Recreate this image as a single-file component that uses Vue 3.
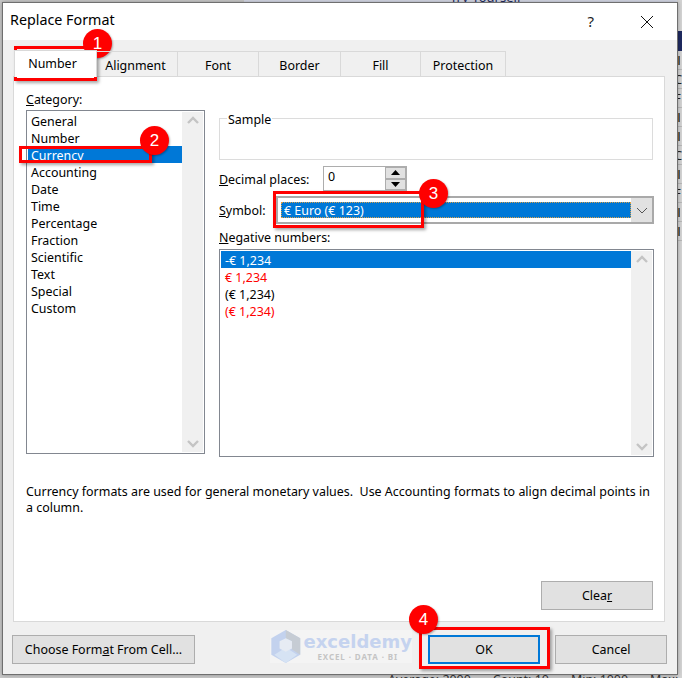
<script setup>
const tabs = ['Number', 'Alignment', 'Font', 'Border', 'Fill', 'Protection']
const categories = ['General', 'Number', 'Currency', 'Accounting', 'Date', 'Time', 'Percentage', 'Fraction', 'Scientific', 'Text', 'Special', 'Custom']
const negatives = [
  { t: '-€ 1,234', c: 'sel' },
  { t: '€ 1,234', c: 'red' },
  { t: '(€ 1,234)', c: '' },
  { t: '(€ 1,234)', c: 'red' }
]
const sheetRows = ['bar', 'C', 'F', 'bar', 'bar', 'C', 'bar', 'F', 'bar', 'bar']
</script>

<template>
  <div class="page">
    <div class="top-strip"><span class="top-text">Try Yourself</span></div>
    <div class="sheet-strip">
      <div class="sheet-head"></div>
      <div v-for="(r, i) in sheetRows" :key="i" class="sheet-row">
        <span v-if="r === 'bar'" class="sheet-bar"></span>
        <span v-else class="sheet-letter">{{ r }}</span>
      </div>
    </div>
    <div class="status">
      <span>Average: 2000</span>
      <span>Count: 10</span>
      <span>Min: 1000</span>
      <span>Max: 4000</span>
    </div>

    <div class="dialog">
      <header class="titlebar">
        <span class="title">Replace Format</span>
        <span class="help">?</span>
        <svg class="close" width="14" height="14" viewBox="0 0 14 14"><path d="M1 1 L13 13 M13 1 L1 13" stroke="#111" stroke-width="1" fill="none" /></svg>
      </header>

      <div class="tabs">
        <div v-for="(t, i) in tabs" :key="t" class="tab" :class="['tab' + i, { active: i === 0 }]">{{ t }}</div>
      </div>

      <section class="panel">
        <div class="columns">
          <div class="col-left">
            <div class="label"><u>C</u>ategory:</div>
            <div class="listbox cat-list">
              <div class="items">
                <div v-for="c in categories" :key="c" class="item" :class="{ sel: c === 'Currency' }">{{ c }}</div>
              </div>
              <div class="scroll">
                <svg width="16" height="10" viewBox="0 0 16 10"><path d="M3 8 L8 3 L13 8" fill="none" stroke="#c4c4c4" stroke-width="2.4" /></svg>
                <svg width="16" height="10" viewBox="0 0 16 10"><path d="M3 2 L8 7 L13 2" fill="none" stroke="#c4c4c4" stroke-width="2.4" /></svg>
              </div>
            </div>
          </div>

          <div class="col-right">
            <div class="sample"><span class="legend">Sample</span></div>
            <div class="row decimal-row">
              <span class="row-label dec-label"><u>D</u>ecimal places:</span>
              <div class="spin-input">
                <span>0</span>
                <div class="spin">
                  <div class="spin-btn"><svg width="9" height="5" viewBox="0 0 9 5"><path d="M4.5 0 L9 5 L0 5 Z" fill="#000" /></svg></div>
                  <div class="spin-btn"><svg width="9" height="5" viewBox="0 0 9 5"><path d="M0 0 L9 0 L4.5 5 Z" fill="#000" /></svg></div>
                </div>
              </div>
            </div>
            <div class="row symbol-row">
              <span class="row-label sym-label"><u>S</u>ymbol:</span>
              <div class="combo">
                <div class="combo-value">€ Euro (€ 123)</div>
                <div class="combo-btn"><svg width="12" height="7" viewBox="0 0 12 7"><path d="M1 1 L6 6 L11 1" fill="none" stroke="#555" stroke-width="1" /></svg></div>
              </div>
            </div>
            <div class="label neg-label"><u>N</u>egative numbers:</div>
            <div class="listbox neg-list">
              <div class="items">
                <div v-for="(n, i) in negatives" :key="i" class="item" :class="n.c">{{ n.t }}</div>
              </div>
              <div class="scroll">
                <svg width="16" height="10" viewBox="0 0 16 10"><path d="M3 8 L8 3 L13 8" fill="none" stroke="#c4c4c4" stroke-width="2.4" /></svg>
                <svg width="16" height="10" viewBox="0 0 16 10"><path d="M3 2 L8 7 L13 2" fill="none" stroke="#c4c4c4" stroke-width="2.4" /></svg>
              </div>
            </div>
          </div>
        </div>

        <p class="desc">Currency formats are used for general monetary values.&nbsp; Use Accounting formats to align decimal points in<br>a column.</p>

        <div class="clear-row">
          <button class="btn">Clea<u>r</u></button>
        </div>
      </section>

      <footer class="footer">
        <button class="btn choose">Choose Form<u>a</u>t From Cell...</button>
        <div class="actions">
          <button class="btn ok">OK</button>
          <button class="btn">Cancel</button>
        </div>
      </footer>
    </div>

    <div class="watermark">
      <svg width="32" height="33" viewBox="0 0 30 32">
        <path d="M15 0 L29 8 L29 24 L15 32 L1 24 L1 8 Z" fill="#c3d2ee" />
        <path d="M15 0 L29 8 L29 24 L21 19 L21 11 L15 8 Z" fill="#c6ccd4" />
        <path d="M15 17 L26 24 L15 32 L4 24 Z" fill="#d6e3f4" />
        <path d="M15 8 L21 11 L21 18 L15 21 L9 18 L9 11 Z" fill="#e6ebf3" />
      </svg>
      <div class="wm-text">
        <div class="wm-name">exceldemy</div>
        <div class="wm-tag">EXCEL · DATA · BI</div>
      </div>
    </div>

    <div class="mark mark-number"></div>
    <div class="mark mark-currency"></div>
    <div class="mark mark-symbol"></div>
    <div class="mark mark-ok"></div>
    <div class="badge badge1">1</div>
    <div class="badge badge2">2</div>
    <div class="badge badge3">3</div>
    <div class="badge badge4">4</div>
  </div>
</template>

<style>
html, body { margin: 0; padding: 0; }
</style>

<style scoped>
.page {
  position: relative;
  width: 682px;
  height: 678px;
  overflow: hidden;
  background: #c9c9c9;
  font-family: "Noto Sans", "Open Sans", sans-serif;
  font-size: 12.45px;
  line-height: 17px;
  color: #000;
}
.top-strip {
  position: absolute;
  left: 244px;
  top: 0;
  right: 0;
  height: 3px;
  background: #d5d9e6;
  overflow: hidden;
}
.top-text {
  position: absolute;
  left: 206px;
  top: -11px;
  font-size: 13px;
  color: #1f2a60;
}
.sheet-strip {
  position: absolute;
  right: 0;
  top: 0;
  width: 5px;
  padding-top: 31px;
  height: 100%;
  box-sizing: border-box;
  background: #d3d3d3;
}
.sheet-head { height: 20px; background: #1f2a60; }
.sheet-row {
  height: 18px;
  border-bottom: 1px solid #b8b8b8;
  display: flex;
  align-items: center;
  overflow: hidden;
  padding-left: 1px;
}
.sheet-bar { width: 2px; height: 9px; background: linear-gradient(90deg, #b0660f, #1f5fa8); }
.sheet-letter { font-size: 13px; margin-left: -4px; color: #222; }
.status {
  position: absolute;
  left: 388px;
  top: 671px;
  display: flex;
  gap: 22px;
  white-space: nowrap;
  color: #333;
}
.dialog {
  position: absolute;
  left: 2px;
  top: 2px;
  width: 676px;
  height: 673px;
  box-sizing: border-box;
  border: 1px solid #6f6f6f;
  background: #f0f0f0;
  box-shadow: 0 0 4px rgba(0, 0, 0, 0.3);
  display: flex;
  flex-direction: column;
}
.titlebar {
  box-sizing: border-box;
  height: 37px;
  flex: none;
  background: #fff;
  display: flex;
  align-items: center;
  padding: 0 23px 0 7px;
}
.title { font-size: 14.3px; flex: 1; margin-top: -4px; }
.help { font-size: 15px; margin-right: 46px; color: #222; }
.close { display: block; }
.tabs {
  display: flex;
  height: 25px;
  margin: 11px 0 0 11px;
  flex: none;
  position: relative;
  z-index: 1;
}
.tab {
  box-sizing: border-box;
  height: 25px;
  border: 1px solid #d9d9d9;
  border-left: none;
  border-bottom: none;
  display: flex;
  align-items: center;
  justify-content: center;
  padding-top: 2px;
}
.tab.active {
  background: #fff;
  height: 27px;
  margin-top: -1px;
  border-left: 1px solid #d9d9d9;
  padding: 0 6px 2px 0;
}
.tab1 { padding-right: 3px; }
.tab0 { width: 83px; }
.tab1 { width: 81px; }
.tab2 { width: 81px; }
.tab3 { width: 82px; }
.tab4 { width: 80px; }
.tab5 { width: 85px; }
.panel {
  box-sizing: border-box;
  flex: none;
  height: 546px;
  width: 652px;
  margin-left: 10px;
  background: #fff;
  border: 1px solid #d9d9d9;
  padding: 14px 11px 11px 12px;
  display: flex;
  flex-direction: column;
}
.columns { display: flex; gap: 14px; }
.col-left { width: 179px; flex: none; }
.col-right { width: 435px; flex: none; }
.label { height: 17px; }
.cat-list { margin-top: 2px; height: 344px; }
.listbox {
  box-sizing: border-box;
  border: 1px solid #828790;
  display: flex;
  padding: 1px;
}
.items { flex: 1; min-width: 0; }
.item { height: 17px; line-height: 19px; padding-left: 4px; white-space: nowrap; }
.cat-list .item { padding-left: 3px; }
.item.sel { background: #0078d7; color: #fff; }
.item.red { color: #f00; }
.scroll {
  width: 21px;
  flex: none;
  background: #f0f0f0;
  display: flex;
  flex-direction: column;
  justify-content: space-between;
  align-items: center;
  padding: 3px 0;
  box-sizing: border-box;
}
.scroll svg { display: block; }
.sample {
  position: relative;
  box-sizing: border-box;
  margin-top: 27px;
  height: 42px;
  width: 434px;
  border: 1px solid #dcdcdc;
}
.legend {
  position: absolute;
  left: 7px;
  top: -8px;
  background: #fff;
  padding: 0 1px;
}
.row { display: flex; align-items: center; }
.row-label { flex: none; }
.dec-label { width: 104px; padding-top: 2px; }
.sym-label { width: 57px; }
.decimal-row { margin-top: 6px; height: 25px; }
.spin-input {
  box-sizing: border-box;
  width: 84px;
  height: 25px;
  border: 1px solid #adadad;
  display: flex;
  justify-content: space-between;
  padding: 1px 0 0 4px;
}
.spin { width: 21px; display: flex; flex-direction: column; gap: 0; margin-top: -1px; }
.spin-btn {
  box-sizing: border-box;
  height: 12px;
  background: #e1e1e1;
  border: 1px solid #adadad;
  display: flex;
  align-items: center;
  justify-content: center;
}
.symbol-row { margin-top: 5px; height: 28px; }
.combo {
  box-sizing: border-box;
  width: 378px;
  height: 28px;
  border: 2px solid #a9a9a9;
  display: flex;
  padding: 4px 0 4px 3px;
  position: relative;
}
.combo-value {
  flex: 1;
  background: #0078d7;
  color: #fff;
  height: 16px;
  line-height: 17px;
  padding-left: 3px;
  outline: 1px dotted #d9a04a;
  outline-offset: -1px;
}
.combo-btn {
  width: 21px;
  background: #e1e1e1;
  margin: -4px 0;
  display: flex;
  align-items: center;
  justify-content: center;
}
.neg-label { margin-top: 5px; }
.neg-list { margin-top: 3px; height: 208px; }
.desc {
  margin: 27px 0 0;
  line-height: 16px;
  white-space: nowrap;
}
.clear-row { margin-top: auto; display: flex; justify-content: flex-end; }
.btn {
  box-sizing: border-box;
  width: 112px;
  height: 29px;
  background: #e1e1e1;
  border: 1px solid #adadad;
  font: inherit;
  color: #000;
  padding: 0;
}
.footer {
  display: flex;
  justify-content: space-between;
  padding: 13px 10px 0 9px;
}
.choose { width: 183px; }
.actions { display: flex; gap: 15px; }
.ok { border: 2px solid #0078d7; }
.watermark {
  position: absolute;
  left: 270px;
  top: 630px;
  width: 142px;
  height: 33px;
  display: flex;
  gap: 2px;
  background: rgba(255, 255, 255, 0.25);
}
.wm-text { line-height: 1; }
.wm-name {
  font-family: "DejaVu Sans", sans-serif;
  font-weight: 700;
  font-size: 18px;
  line-height: 23px;
  color: #c5d3ef;
}
.wm-tag {
  font-size: 8px;
  letter-spacing: 0.9px;
  line-height: 8px;
  color: #c4c4c4;
  font-weight: 700;
  text-align: center;
}
.mark {
  position: absolute;
  box-sizing: border-box;
  border: 3px solid #f00;
  box-shadow: 2px 2px 3px rgba(0, 0, 0, 0.35);
}
.mark-number { left: 14px; top: 46px; width: 83px; height: 35px; }
.mark-currency { left: 19px; top: 146px; width: 133px; height: 17px; }
.mark-symbol { left: 273px; top: 191px; width: 151px; height: 37px; }
.mark-ok { left: 419px; top: 627px; width: 131px; height: 42px; }
.badge {
  position: absolute;
  width: 29px;
  height: 29px;
  border-radius: 50%;
  background: #f00;
  color: #fff;
  font-family: "Liberation Sans", sans-serif;
  font-size: 17px;
  line-height: 29px;
  text-align: center;
  box-shadow: 1px 1px 2px rgba(0, 0, 0, 0.3);
}
.badge1 { left: 83px; top: 29px; }
.badge2 { left: 140px; top: 126px; }
.badge3 { left: 419px; top: 179px; }
.badge4 { left: 409px; top: 605px; }
</style>
